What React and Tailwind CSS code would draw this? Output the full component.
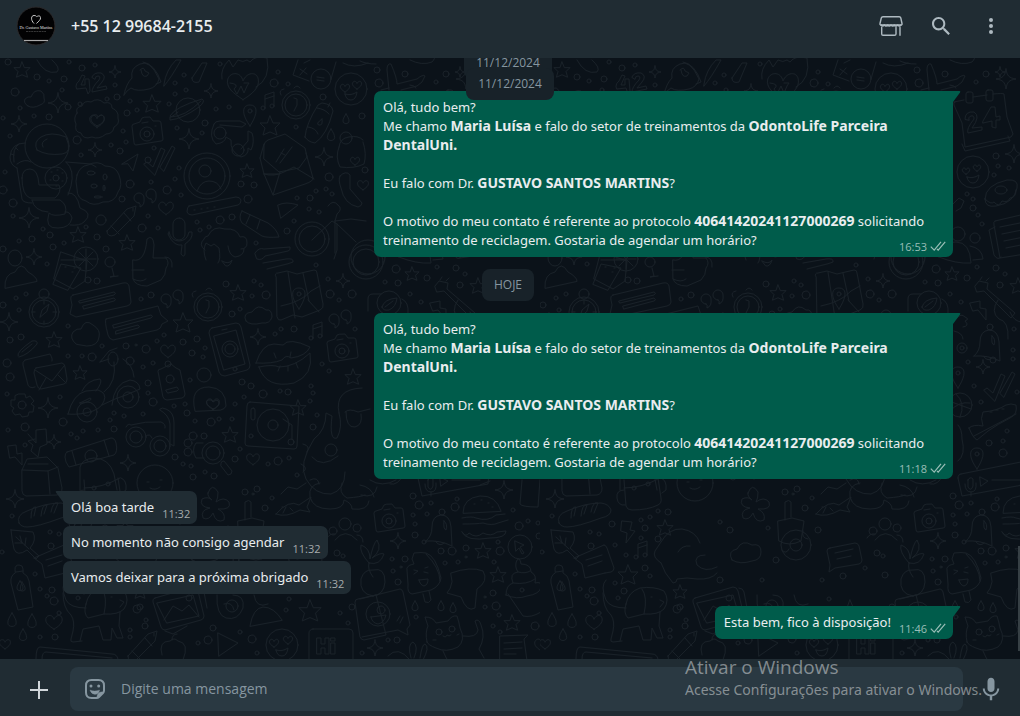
const dots = [
	// top left
	[8, 62, 3], [69, 62, 2], [82, 68, 3], [95, 65, 2], [64, 79, 3], [37, 77, 3], [49, 81, 2], [15, 92, 4],
	[20, 108, 2], [3, 118, 2], [62, 90, 2], [68, 107, 3], [49, 117, 3], [34, 116, 2], [80, 104, 2],
	[107, 99, 2], [117, 97, 3], [115, 85, 2], [130, 101, 2], [137, 110, 2], [127, 113, 3], [175, 83, 2],
	[184, 75, 2], [186, 90, 2], [175, 94, 2], [220, 64, 2], [169, 104, 2], [177, 128, 2], [205, 123, 3],
	[202, 133, 2], [216, 109, 2], [229, 107, 2], [274, 83, 4], [278, 72, 2], [288, 84, 2], [362, 116, 3],
	[323, 97, 3], [296, 127, 2], [10, 136, 2], [77, 140, 4], [111, 145, 2], [123, 131, 2], [126, 142, 2],
	[120, 151, 3], [81, 155, 2], [154, 148, 2], [148, 160, 3], [179, 168, 2], [175, 179, 2], [5, 172, 2],
	[3, 190, 4], [13, 203, 4], [130, 184, 4], [151, 182, 2], [167, 190, 4], [181, 195, 2], [122, 199, 3],
	[148, 216, 2], [142, 228, 4], [158, 228, 2], [101, 220, 5], [13, 216, 2], [43, 229, 2], [32, 239, 3],
	[19, 241, 2], [50, 235, 3], [3, 249, 3], [53, 247, 3], [64, 243, 2], [86, 227, 2], [97, 237, 3],
	[106, 249, 3], [47, 264, 2], [197, 222, 2], [220, 220, 4], [232, 217, 3], [209, 227, 2], [200, 230, 2],
	[241, 184, 3], [254, 185, 3], [248, 199, 4], [329, 177, 4], [316, 191, 2], [326, 189, 2], [297, 198, 2],
	[310, 198, 3], [332, 194, 2], [309, 209, 2], [319, 212, 2], [287, 231, 3], [294, 221, 2], [256, 243, 2],
	[316, 265, 2], [365, 170, 3],
	// middle left
	[16, 298, 2], [26, 294, 2], [3, 305, 3], [19, 310, 2], [88, 280, 3], [97, 281, 3], [68, 326, 2],
	[10, 340, 3], [21, 337, 3], [7, 363, 4], [10, 377, 4], [7, 394, 2], [60, 397, 2], [68, 356, 2],
	[82, 356, 2], [92, 357, 4], [126, 346, 3], [136, 345, 1], [102, 346, 2], [141, 299, 2], [151, 295, 3],
	[146, 349, 4], [130, 361, 4], [143, 367, 2], [153, 363, 2], [148, 383, 3], [148, 393, 2], [153, 402, 4],
	[164, 335, 2], [157, 341, 2], [183, 342, 3], [197, 339, 3], [192, 353, 3], [168, 364, 3], [203, 357, 2],
	[205, 348, 2], [226, 284, 3], [254, 281, 2], [261, 285, 2], [252, 296, 2], [266, 295, 4], [232, 314, 3],
	[240, 309, 2], [275, 334, 2], [281, 329, 2], [294, 329, 3], [328, 279, 2], [330, 294, 4], [339, 300, 2],
	[352, 294, 4], [355, 329, 2], [322, 364, 2], [329, 371, 2], [242, 382, 3], [251, 386, 3], [190, 380, 2],
	[185, 404, 2], [174, 406, 2], [244, 397, 2], [263, 394, 4], [280, 391, 2], [288, 392, 3], [235, 404, 2],
	[311, 386, 2], [313, 393, 2], [310, 401, 2], [317, 415, 2], [313, 427, 3], [187, 413, 3], [195, 421, 2],
	[211, 422, 4], [219, 419, 2], [232, 419, 2], [114, 413, 2], [124, 416, 2], [143, 414, 2], [110, 420, 2],
	[8, 430, 2], [25, 427, 4], [63, 422, 4], [71, 434, 2], [83, 431, 2], [98, 430, 2], [114, 429, 3],
	[77, 438, 2], [25, 445, 2], [175, 457, 3], [183, 464, 2], [191, 466, 2], [193, 477, 3], [205, 472, 2],
	[214, 476, 3], [235, 459, 3], [240, 449, 2], [278, 461, 4], [289, 458, 2], [268, 464, 2], [297, 475, 2],
	// bottom left
	[257, 489, 3], [265, 508, 3], [253, 494, 1], [245, 492, 3], [272, 498, 2], [12, 516, 2], [50, 532, 2],
	[59, 534, 2], [51, 546, 3], [2, 552, 2], [35, 574, 2], [40, 589, 2], [47, 596, 2], [52, 590, 3],
	[54, 601, 4], [59, 613, 2], [40, 637, 2], [55, 637, 3], [137, 609, 4], [146, 620, 2], [140, 607, 3],
	[145, 626, 3], [130, 630, 2], [130, 637, 2], [198, 643, 2], [213, 628, 3], [208, 640, 4], [240, 632, 2],
	[252, 639, 4], [257, 653, 2], [286, 610, 2], [303, 576, 3], [289, 599, 2], [340, 613, 2], [348, 623, 2],
	[352, 607, 3], [362, 653, 2], [337, 553, 3], [343, 556, 2],
	[72, 524, 3], [101, 520, 2], [110, 517, 2], [118, 511, 2], [128, 512, 3], [105, 528, 3], [101, 538, 2],
	[118, 539, 3], [75, 545, 2], [86, 555, 2], [105, 568, 3], [110, 576, 2], [75, 583, 2], [84, 591, 3],
	[78, 598, 2], [180, 522, 2], [190, 530, 3], [228, 528, 2], [236, 560, 3], [278, 530, 3], [282, 580, 2],
	[180, 580, 3], [222, 580, 2], [325, 568, 2], [345, 575, 3],
	// bottom right
	[413, 496, 3], [419, 505, 4], [431, 503, 2], [457, 499, 2], [455, 507, 4], [413, 515, 2], [427, 514, 2],
	[415, 524, 2], [415, 535, 3], [424, 542, 2], [441, 551, 3], [452, 551, 4], [466, 548, 3], [445, 563, 2],
	[458, 562, 2], [466, 557, 1], [392, 559, 2], [405, 559, 3], [393, 571, 2], [401, 567, 1], [398, 582, 3],
	[416, 617, 2], [485, 597, 1], [485, 607, 2], [493, 593, 3], [496, 606, 4], [499, 615, 2], [493, 626, 2],
	[500, 632, 2], [535, 626, 4], [498, 542, 2], [500, 551, 4], [494, 562, 2], [519, 526, 4], [513, 510, 2],
	[528, 521, 2], [538, 523, 2], [539, 536, 3], [522, 590, 2], [388, 640, 2], [397, 640, 3],
	// top right
	[377, 70, 3], [379, 83, 4], [405, 74, 3], [446, 74, 3], [436, 82, 2], [456, 156, 3], [458, 166, 2],
	[469, 168, 2], [454, 175, 2], [427, 194, 2], [433, 199, 2], [433, 208, 3], [438, 215, 2], [442, 224, 2],
	[437, 267, 2], [396, 269, 4], [385, 282, 2], [398, 283, 3], [427, 278, 3], [410, 294, 2], [421, 302, 2],
	[456, 268, 3], [465, 274, 2], [460, 285, 3], [474, 329, 2], [473, 350, 2], [428, 362, 2], [453, 360, 3],
	[473, 359, 2], [441, 402, 2], [434, 386, 2], [467, 431, 2], [449, 443, 3], [463, 441, 2], [463, 453, 4],
	[477, 392, 2],
];

const stars = [
	[22, 70, 8], [152, 104, 9], [247, 171, 7], [78, 235, 8], [127, 243, 8], [270, 126, 10], [54, 340, 8],
	[80, 373, 7], [183, 323, 10], [238, 293, 8], [298, 408, 8], [353, 377, 8], [230, 435, 8], [483, 551, 8],
	[498, 575, 8], [512, 623, 8], [310, 611, 11], [412, 274, 7], [478, 286, 8], [562, 70, 8],
	[125, 528, 8], [88, 575, 10], [140, 592, 7],
];

const sparkles = [
	[115, 72, 6], [58, 103, 10], [19, 124, 8], [211, 91, 7], [189, 139, 10], [95, 150, 7], [324, 157, 9],
	[29, 218, 10], [34, 257, 8], [9, 322, 9], [48, 408, 10], [258, 337, 8], [343, 281, 7], [54, 442, 7],
	[128, 463, 8], [15, 499, 9], [504, 490, 9], [555, 499, 9], [398, 541, 8], [375, 648, 8], [466, 79, 10],
	[474, 154, 9], [443, 367, 7], [460, 72, 5],
];

const hearts = [
	[166, 208, 8], [97, 121, 8], [243, 86, 17], [168, 351, 8], [213, 404, 7], [253, 459, 7], [54, 622, 9],
	[542, 645, 8], [363, 185, 6], [355, 161, 5], [5, 644, 6], [274, 643, 5], [288, 640, 5], [426, 171, 4],
	[437, 168, 4], [345, 88, 5], [357, 85, 5],
];

const drops = [
	[346, 119, 5], [331, 135, 6], [12, 620, 7], [32, 621, 7], [23, 635, 6], [415, 606, 5], [441, 606, 5],
	[453, 608, 5], [20, 586, 5], [561, 586, 5],
];

const starPath = 'M0-10 3-3 10-3 5 2 7 9 0 6-7 9-5 2-10-3-3-3Z';
const sparklePath = 'M0-10C1-3 3-1 10 0 3 1 1 3 0 10-1 3-3 1-10 0-3-1-1-3 0-10Z';
const heartPath = 'M0 8C-6 4-10 1-9-4-7-9-1-8 0-3 2-8 8-9 9-4 10 1 5 5 0 8Z';
const dropPath = 'M0-10C4-4 6 0 6 4 6 11-6 11-6 4-6 0-4-4 0-10Z';

const place = (list, d) => list.map(([x, y, r]) => (
	<path key={`${x}-${y}`} d={d} transform={`translate(${x} ${y}) scale(${r / 10})`} vectorEffect="non-scaling-stroke" />
));

const Doodles = () => {
	return (
		<svg className="absolute inset-0 w-full h-full" aria-hidden="true">
			<defs>
				<g id="camera">
					<path d="M-15-8q0-2 2-2l6-2 2-4q1-1 8-1l3 4 6 0q2 0 2 2l2 16q0 2-2 2l-25 4q-2 0-2-2Z" />
					<circle r="7" /><circle r="3" /><path d="M-5-11l6-1M8-8h1" />
				</g>
				<g id="face">
					<circle r="16" />
					<path d="M-6 5q6 2 12-2-1 8-6 8t-6-6Z" />
				</g>
				<g id="clock">
					<circle r="14" /><circle r="11" /><path d="M-2-7l3 1v6l-3 6M-2-17q3-4 6 0M-15-10q-3-5 3-6" />
				</g>
				<g id="quotes">
					<path d="M0 5a5 5 0 1 1 5-5q1 7-4 9 1-3-1-4ZM12 1a5 5 0 1 1 5-5q1 7-4 9 1-3-1-4Z" />
				</g>
				<g id="notes"><path d="M-5 7V-6l9-3V5M-5-2l9-3" /><circle cx="-7" cy="7" r="2" /><circle cx="2" cy="5" r="2" /></g>
				<g id="pin"><path d="M0 12C-10-2-7-9 0-9S9-2 0 12Z" /><circle cy="-3" r="2" /></g>
				<g id="bell">
					<path d="M-14 13q6-5 6-14 0-11 9-12 9 0 10 12l1 19q-12-6-26-5ZM-4 14q4 5 8 1M4-7q4 3 2 9-3-1-2-9Z" />
					<circle cx="2" cy="-16" r="3" />
				</g>
				<g id="leaf"><path d="M-12-12q12 1 22 2 4 8-3 16l9 8-3 3-9-9q-10 7-13-1-2-8-3-19ZM-7-5L6 7M-3-6l2 7M-8 1l7 0M3-4l-1 7" /></g>
				<g id="bottle"><path d="M-5-18q0-4 4-4t4 4l0 4q5 2 6 8l4 26-15 3-7-27q-1-7 4-10ZM2-5q6 8 1 9t-1-9ZM-4-15l7-1" /></g>
				<g id="bread"><path d="M-26 9q-3-8 8-12 18-8 34-8 8 1 10 7 0 6-10 8-24 9-34 9-6 0-8-4ZM-14 4q0-12 5-11l-2 9M-4 2q1-12 6-11l-3 9M6-2q2-11 7-9l-4 10" /></g>
				<g id="ticks"><path d="M-16 2l3-2 6 5L1-14l4 2-10 25ZM0 5L12-16l3 2L4 9Z" /></g>
				<g id="pencil"><path d="M-14 10L6-12 15-15 13-5-6 14q-8 3-8-4ZM-10 5l8 8M3-8l7 8M12-13v3" /></g>
			</defs>
			<pattern id="doodles" y="-58" width="540" height="716" patternUnits="userSpaceOnUse">
				<g fill="none" stroke="#192128" strokeWidth="1" strokeLinejoin="round" strokeLinecap="round">
					{dots.map(([x, y, r]) => <circle key={`${x}-${y}`} cx={x} cy={y} r={r} />)}
					{place(stars, starPath)}
					{place(sparkles, sparklePath)}
					{place(hearts, heartPath)}
					{place(drops, dropPath)}

					<use href="#camera" x="147" y="134" />
					<use href="#camera" x="342" y="351" />
					<use href="#camera" x="389" y="521" />
					<use href="#face" x="351" y="89" />
					<use href="#face" x="282" y="645" />
					<use href="#face" x="433" y="172" />
					<use href="#clock" x="296" y="105" />
					<use href="#clock" x="208" y="307" />
					<use href="#quotes" x="139" y="198" />
					<use href="#quotes" x="166" y="299" />
					<use href="#quotes" x="334" y="319" />
					<use href="#notes" x="270" y="101" />
					<use href="#notes" x="318" y="331" />
					<use href="#notes" x="103" y="550" />
					<use href="#pin" x="250" y="114" />
					<use href="#pin" x="418" y="376" />
					<use href="#pin" x="437" y="457" />
					<use href="#bell" x="440" y="528" />
					<use href="#bell" x="448" y="343" />
					<use href="#leaf" x="23" y="542" />
					<use href="#bottle" x="20" y="587" />
					<use href="#bread" x="45" y="514" />
					<use href="#ticks" x="160" y="162" />
					<use href="#ticks" x="460" y="388" />
					<use href="#pencil" x="121" y="221" />
					<use href="#pencil" x="142" y="646" />

					{/* 42 and cloud */}
					<path d="M76 86q0-3 3-5l3-6 3 1-4 9 4 0v-6h4l1 12-2 3-2-6-9 1ZM92 77q2-5 9-4 6 3 1 9l-5 6 9-2 1 3-15 3q0-5 7-12 2-4-1-4t-3 3Z" />
					<path d="M28 106q-5-3-3-7 3-3 6-2 3-8 10-6 4 3 3 7 2 5-4 7-7 4-12 1Z" />
					{/* rocket */}
					<path d="M124 95q2-11 8-17-2-10 8-14 10-5 19 15-2 8-10 10-12 3-18-1-4 2-7 7ZM140 70q4-4 5 1l4 2-2 3q-5 2-6-6M143 62q12 2 18 20l-5 2M164 84q2-14 12-24l5 0q-10 18-17 26ZM192 78l10-15 5 0-8 19q-7 2-7-4Z" />
					<path d="M222 79q-2-10 7-19l4 7 5-7q5 3 9 0l3 2q5-7 17-4 4 21-11 29M230 83q10 1 4 6l3 5 4-8 3 7 3-7 2-3h-5" />
					{/* calculator */}
					<path d="M298 60l-5 15 16 6M336 62l-5 17M310 60l-6 3M300 69l7 5M306 68l-6 7M37 60q8 15 20 12 4-4-5-12M343 63q11 6 25 0" />
					<circle cx="321" cy="79" r="10" /><path d="M317 77l7 1M317 80l7 1" />
					{/* badge */}
					<path d="M77 113q-2-6 5-7 2-6 9-4 7-5 13 1 8-2 8 5 7 3 6 10 2 6-4 9-1 7-8 7-7 6-14 3-9 3-11-4-7-1-5-9-3-6 1-11Z" />
					<path d="M97 126q-9-5-5-10 5-3 6 1 4-4 6 0 2 5-7 9Z" />
					{/* planet */}
					<circle cx="188" cy="110" r="12" />
					<path d="M178 112q-8 7-8 4 5-9 32-17 4 2-3 8-17 12-29 13l0-3q15 0 31-16" />
					{/* goggles */}
					<path d="M214 124q1-3 6-3h20l6 3-4 3-22-2M214 124q-6 13 2 20 9-1 10-7l5 3q-1 12 10 17 8-2 7-9l3 2q4-8 1-17l-4-2v10l-7 8" />
					<circle cx="220" cy="133" r="6" /><circle cx="238" cy="150" r="6" />
					{/* astronaut */}
					<circle cx="47" cy="146" r="22" />
					<path d="M37 150q-4-8 4-13 10-6 25 0 7 16-4 17-15 2-25-4ZM43 147q-3-5 4-8M25 143q-14 0-15 14 0 8 7 11M19 144q-7 4-5 18M11 154l3 1M16 148l2 2M17 168l5 31q1 4 10 4M22 178q0-9 8-9 8 0 9 16l20 0q3 7-4 13l-25 0q-8-3-8-20ZM17 164q8-6 14-2M66 162q9 8 5 24l-3 9M66 162l25 2 5 3M32 200q2 11 16 12M32 200l28 0q8 5 5 14-12 3-16-1-5 16 9 15 12 0 14-10-2-7-7-6M68 193q9-1 12 15 14 5 4 14-4 4-14 3" />
					<circle cx="56" cy="178" r="11" /><circle cx="56" cy="178" r="3" />
					<path d="M51 172h1M57 170h1M62 173h1M50 180h1M62 181h1M56 186h1" />
					<path d="M77 175q3-9 11-10 10-5 17 1 11 0 14 9 4 11-1 17-3 11-15 10-10 5-17-1-9-2-9-12-2-8 0-14Z" />
					<ellipse cx="91" cy="173" rx="4" ry="2" /><ellipse cx="105" cy="177" rx="2" ry="3" /><ellipse cx="94" cy="186" rx="3" ry="2" /><ellipse cx="104" cy="188" rx="1" ry="3" /><ellipse cx="98" cy="197" rx="4" ry="1" />
					<path d="M122 164l16-10-5 17-5-7Z" />
					{/* user badge */}
					<circle cx="207" cy="176" r="23" /><circle cx="207" cy="176" r="18" /><circle cx="205" cy="171" r="6" />
					<path d="M197 191q4-10 12-10 9 0 12 8" />
					<path d="M189 206l47-9q4 0 5 3 0 4-3 5l-46 10q-4 0-5-3 0-5 2-6ZM194 210h1M201 209h1M207 208h1M214 207h1" />
					{/* envelope */}
					<path d="M264 145q0-3 4-5l17-6 20 14 2 9-8 11-20 4-15-13ZM260 158l4-14M260 158l4 16 9 21M264 174h14M264 174q10 3 20-2l10-5 20 12M280 172l-7 23 32-11q9-3 8-6M313 178l-7-25M276 162l8-13M280 163l12-16M281 153l4 2" />
					{/* water bottle */}
					<path d="M305 137q1-13 13-32l4-2q10 1 11 8-6 24-18 32-7-1-10-6ZM308 127q8 1 10 7M317 108q8 1 12 6M328 107l2-4M322 119q-7 5-3 6t3-6" />
					<path d="M339 147q1-9 10-10 9-2 14 3M363 142q4 12 1 22-10 5-24 3-5-10-1-20M340 176q6-6 10-1l0 14 12 14q0 3-4 4-14-3-17-19-3-8-1-12Z" />
					<circle cx="346" cy="138" r="6" />
					{/* microphone */}
					<rect x="173" y="218" width="12" height="22" rx="6" /><path d="M169 232q-2 2 0 4 4 8 10 9l3 0-1 9q3 4 4 0v-10q8-5 7-12l-3 0q-2 9-10 9t-10-9" />
					{/* monkey */}
					<path d="M205 250q-7-5-1-11 1-3 4-3 5-11 17-7 12-1 15 8 7-2 7 6 0 6-6 6M206 260q-4-10 0-17l5 3 3-2 5 4q2 12-1 15M228 246q1 9 7 11 9-1 9-8M222 261q7 4 10-1-2 7-6 6Z" />
					<path d="M242 211l26 12q9 6 11 14-12 1-17-1l-20-13q-4-6 0-12ZM250 215l-4 9M260 220l-3 9M278 205q8-4 20 0l-17 13Z" />
					{/* brushes */}
					<path d="M255 253q4-6 9-4l26-2q1 3-2 4l-23 5q-3 5-8 3ZM263 263l23-4q8-1 7 3-5 2-10 3l-16 4" />
					{/* bike */}
					<circle cx="312" cy="239" r="17" /><circle cx="312" cy="239" r="13" />
					<path d="M312 240l20-19 5 3 19 18M335 221v32M335 221l16-2 15 2M328 206q5-7 10-1 5 4-1 9l-2 7M337 224v26l-3 9" /><circle cx="368" cy="257" r="17" />
					{/* cocktail */}
					<path d="M61 252l26 9-2 20-12 8-19-10ZM61 260h25M65 267h1M72 272h1M74 268h1" /><circle cx="86" cy="259" r="12" /><path d="M86 249v20M76 259h20M79 252l14 14M93 252l-14 14" />
					<circle cx="110" cy="262" r="5" /><path d="M112 268l2 8-4 1 8-1" /><ellipse cx="15" cy="258" rx="7" ry="8" />
					{/* thumb */}
					<path d="M133 260q12 3 14-21 6-5 7 6l-1 13h13q4 5 0 10 0 7-5 12l-14 6q-12 0-14-7ZM165 257q8 0 7 10M132 270h12M133 279q8 4 13 0" />

					<path d="M5 288q-1-14 10-16 6-12 13 0 9 5 9 9ZM53 284l8-20 20 4-13 22Z" />
					{/* compass */}
					<circle cx="44" cy="312" r="15" /><circle cx="44" cy="312" r="12" /><circle cx="44" cy="294" r="5" /><path d="M40 317l2-7 7-6-2 7ZM44 300v4M32 312h3M53 312h3M44 324v-3" />
					{/* letters */}
					<path d="M73 295l50-12q5-1 6 3l2 16q0 3-4 4l-51 11-6-3 2-9-1-5q-1-4 2-5ZM79 301l35-9q3 1 0 3l-34 8ZM83 306l31-8q3 2 0 3l-30 8Z" />
					<path d="M106 319l52-13 3 9 7 6-6 3q-1 5-5 6l-44 10q-4-1-5-5-4-15-2-16ZM113 325l38-10q3 1 0 3l-37 10ZM116 331l22-6q3 2 0 3l-22 6Z" />
					<path d="M76 344q-7-6-3-12 4-4 8-3 4-11 12-4 8 5 6 12-1 9-12 9Z" />
					<path d="M18 356q-2-4 14-15 6-1 5 3-9 11-18 13M22 352l10-8" />
					<path d="M25 360l25-6q3 5 2 7M25 360q-3 2-2 5l5 20q2 4 7 2M36 368l26-5q3 1 3 4l2 12q0 4-3 5l-23 5q-3 0-4-4l-3-12q0-4 2-5ZM35 370l17 11 12-15M39 390l7-12M66 383l-8-8" />
					{/* clouds */}
					<path d="M246 321q-4-8 6-9 6-9 14-2 6-1 6 7-2 7-10 6-12 3-16-2Z" />
					{/* map */}
					<path d="M276 277q-2-4 2-4l9-2 10 3 17-4q3 0 3 3l6 31q1 4-3 6l-18 7-9-2-12 5q-3 1-4-3ZM281 306q20-4 30-15l9-5M308 300l11 12M288 272l7 46M303 273l6 28" />
					<use href="#pin" x="299" y="297" />
					{/* gear */}
					<circle cx="22" cy="405" r="4" /><path d="M19 394h6l1 4 4-2 4 5-3 3 3 2-1 6-4 0-1 4-6 1-2-3-5 1-3-4 2-3-3-2 0-6 4 0 0-4Z" />
					{/* scooter */}
					<path d="M68 414q5-20 18-23l12-1q9 3 6 11-3 9-18 12-12 2-18 1ZM80 403l10-5q3 1-3 4-6 2-7 1ZM82 391q5-11 18-12 3 3-4 12M114 362q3 20-10 30M100 362l9-11 8-3M112 405q2-22 18-25 9 1 10 9l-14 6-11 4-13 6M100 362l9-3M123 359q10 6 11 18" />
					<ellipse cx="113" cy="359" rx="5" ry="7" /><circle cx="87" cy="412" r="10" /><circle cx="87" cy="412" r="4" /><circle cx="128" cy="397" r="11" /><circle cx="128" cy="397" r="5" />
					{/* passport and phone */}
					<path d="M158 371q0-2 3-2l10-5 5 4 4 2 5 24q0 3-3 4l-15 2q-3 0-4-3ZM166 390l11-3q3 3 0 4l-9 2Z" /><circle cx="170" cy="379" r="4" />
					<path d="M212 328l24-5q4 0 5 4l9 38q0 4-3 5l-22 6q-5 0-6-4l-10-39q0-4 3-5ZM214 336l22-6 9 34-21 6ZM222 330l5-1" /><circle cx="230" cy="349" r="8" /><circle cx="230" cy="349" r="5" /><circle cx="235" cy="369" r="2" />
					{/* lips */}
					<path d="M256 363q6-19 18-19l9 1q6-8 27 2-4 9-19 11-5-4-9 2-10 4-26 3ZM259 367q14-3 20 0 16 0 31-14 4 22-16 30-28 6-35-16ZM276 358l-2-5M290 357l1-5M280 366l-2 5M288 366v5M296 363l2 5" />
					<circle cx="204" cy="375" r="7" /><path d="M195 411q-6-24 14-24 17 1 17 19-1 3-5 4ZM213 409q-10-6-5-9 4-1 5 2 5-4 6 1 0 4-6 6Z" />
					{/* sunglasses */}
					<circle cx="136" cy="437" r="10" /><circle cx="136" cy="437" r="6" /><circle cx="160" cy="446" r="10" /><circle cx="160" cy="446" r="6" />
					<path d="M126 427q2-4 5-2 14-4 30-3 5 2 4 6M160 409q2-2 6 0 8 3 8 14v23l-4-2v-20q-1-9-10-14ZM146 436q4-3 6 2" />
					<path d="M28 434l8 9 0-13 10-1 1 15-7 3-2 10-7-6 2-6-5-4 7-2M8 446l8-1 1 9 5-1 0 12-7-8-5 1Z" />
					{/* turntable */}
					<path d="M250 402l49 4-2 40q0 3-3 3l-46-3q-3 0-3-3l2-37q0-4 3-4Z" /><circle cx="273" cy="425" r="16" /><circle cx="273" cy="425" r="5" /><circle cx="291" cy="442" r="3" /><circle cx="251" cy="436" r="2" /><path d="M292 439v-14l-9-6" /><rect x="251" y="408" width="4" height="12" rx="2" />
					{/* magnifier and paw */}
					<circle cx="213" cy="453" r="11" /><circle cx="213" cy="453" r="7" /><path d="M221 463q0-2 3-2l8 10q0 4-4 4l-7-9ZM203 443l-7 0q-5 7 0 15l8 0" /><circle cx="193" cy="436" r="4" /><circle cx="204" cy="436" r="3" /><circle cx="188" cy="443" r="4" /><circle cx="188" cy="452" r="4" />
					{/* robot */}
					<path d="M67 452l44-14q4 0 5 5 2 9-2 12l-45 12q-4-5-4-10 0-4 2-5ZM104 440l5 16M72 451l4 14M80 490v-23q2-8 14-9 15 0 20 16l3 16" /><circle cx="91" cy="456" r="6" />
					<circle cx="155" cy="483" r="18" /><path d="M147 482h2M160 480h2M150 488q5 3 10-1" />
					{/* milk carton */}
					<path d="M22 470l5-11 20-2 11 11 4 20q0 6-5 7l-31 1q-4-1-4-5ZM22 470l26 1 10-4M28 464h20M48 471l2 23" />
					{/* octopus */}
					<path d="M339 413q-5-24 23-25M339 413q4 14-2 25-8 3-5-22l-6-3q0 17-12 26-16 25-8 40 9 16 25 15 14-4 14-22M312 457q10 12 26-1M303 444q8 2 4 8M301 464q8 4 2 8M310 480q8-4 9 4M345 412q4-4 13 0l12-3M346 412q0 16 9 15 8-2 6-13" />
					<circle cx="331" cy="450" r="6" />
					{/* fish, flower */}
					<path d="M276 514q13-15 23-9l12-8-4 10 3 5-10-2q-14 8-24 4ZM283 513l3-6M282 507h1M290 508l3 3" />
					<path d="M208 493q4-11 10-1 0 7-2 10 8-6 13 0 3 8-11 7 8 4 6 11-8 4-11-7-4 8-10 5-3-8 7-10-11-1-8-9 6-3 10 1-5-4-4-7Z" />
					{/* backpack and bolt */}
					<path d="M84 480l2 26q1 4 6 4 16 0 26-5 4-2 3-7l-3-20M84 490q-8 0-7 8 1 8 8 7M121 478q6 2 5 12l-4 3M84 488q18 0 36-10" />
					<circle cx="94" cy="488" r="2" /><circle cx="108" cy="484" r="2" />
					<path d="M82 521l10 1-2 8 5 1-9 12 1-10-6-2Z" />
					{/* hand */}
					<path d="M121 563q-9-6-6-12l6-9q8-14 21-13 14 2 18 14M121 563q3 10 12 20 4 0 4-4 10-2 20 0 14 1 20-6M138 552q4-7 12-6M165 555q-12 0-8 10 8 8 20 2" />
					{/* clouds and spool */}
					<path d="M192 560q-5-9 5-11 5-10 15-4 9-2 9 7 0 8-9 9-12 4-20-1Z" />
					<circle cx="256" cy="545" r="15" /><circle cx="256" cy="545" r="6" />
					<path d="M242 550q4 5 7-1M263 531q-2 7 5 8" />
					<path d="M290 548l25-5q3 0 4 3l3 14q0 3-3 4l-24 4-6 4 1-7-3-14q0-3 3-3ZM295 553l18-4M297 559l14-3" />
					{/* cactus and pot */}
					<path d="M245 520v-18q4-3 6 0v15M238 521l14-3 12 3-3 20q-12 6-22 0ZM320 483q-12 2-10 14 3 12 20 12 14 0 14-9 8 3 8 9 16 2 17-8M281 494l7-7 9 2 9-6M342 483q-4 10 5 15 14-1 18-3" />
					<circle cx="345" cy="524" r="6" /><circle cx="333" cy="531" r="4" /><circle cx="357" cy="528" r="4" /><path d="M335 540q10-13 22 0M327 538q3-5 8-4M363 542q0-7-6-7" />
					<path d="M34 558l30-13M34 558l8 6 3 14 20-5M46 560l16-5M48 566l14-5M64 545q2 0 3 3l7 20q0 3-3 4l-6 1" />
					{/* dog */}
					<path d="M66 580q-6 6 0 20 4 8 20 8M63 593q0 15 8 22 4 6 2 16l-2 8q-1 3 2 3l9-1M86 604q2-12 14-16 14-2 24 3 6 9 0 18-6 6-20 5l-16 4q-5-5-2-14ZM102 589q6 8 2 25M111 597h1M120 600l4 2-4 5M80 641l3-12 16-3 4 14 8 0 1-12 5 10 6 0-4-12 1-14" />
					{/* picture cards */}
					<path d="M155 598l38-11q4 0 5 4l6 25q0 3-3 4l-36 10q-3 0-4-3l-8-25q-1-3 2-4ZM157 603l36-8 6 21-32 7ZM164 620l9-14 9 5 7-6 10 12M199 588q4 0 5 4l3 16M165 631l8 3 14-8" /><circle cx="189" cy="598" r="3" />
					<path d="M217 595q-1 20 9 23 12 3 17-10 2-13-10-13M224 604q8-3 10 6" /><circle cx="232" cy="606" r="6" />
					<path d="M250 626q3-18 13-19 11 0 19 13ZM254 595q2 14 14 9" /><path d="M355 602q0-3 3-3l18-4 10 40-22 5q-3 0-4-3Z" />
					{/* laptop */}
					<path d="M36 659q0-12 4-12l72 7q5 0 6 5M42 659q0-7 4-7l66 6" />
					<path d="M162 655q-4-14 8-14 4-4 8 0 12 2 5 19M172 640q0-6 5-6M218 633l20 10-19 13Z" />
					<rect x="309" y="629" width="44" height="34" rx="4" />
					<path d="M317 638h4v6h4v-6h4v16h-4v-6h-4v6h-4ZM331 643h4v11h-4ZM331 638h4v3h-4Z" />
					{/* plane and calendar */}
					<path d="M389 90l-2-20q0-7 4-6 6 14 6 20l20-5q6-5 8-3-2 7-8 10l-16 4M376 64q-10 0-16-3M410 60q12 6 22 2 4-4 2-6M381 90l8-2M410 85q4 0 6 3" />
					<path d="M414 102l10-2M433 97l14-2M453 94q10-1 11 0l3 23 6 17-2 3-46 10-3-24-8-18q-1-3 1-3M422 144l3 7 45-10-2-5" />
					<rect x="426" y="92" width="7" height="11" rx="2" /><rect x="446" y="90" width="7" height="11" rx="2" />
					<path d="M425 119q0-8 9-7 7 4-2 16l10-1v3l-14 3q-2-4 6-14 0-4-3-3t-2 4ZM443 121l8-14 4 0 1 10 4-1 0 4-4 0 0 8-4-1 0-6-9 2Z" />
					{/* donut */}
					<path d="M445 199q0-14 22-19 12-1 10 8-3 15-21 18-11 2-11-7ZM445 199q6 6 9 3 5 6 8-1 6 2 8-3 6 0 6-8" /><ellipse cx="461" cy="190" rx="6" ry="4" />
					<path d="M413 204l6-6 5 3-3 7-5 3M455 221l30-7M455 221q-2 1-1 4l6 33 25-4M455 227l-6 3 5 25q4 6 7 2M460 227l20-4M462 234l20-4M464 241l20-4M466 248l20-4" />
					{/* people */}
					<circle cx="418" cy="234" r="7" /><circle cx="435" cy="238" r="5" /><path d="M399 257q3-16 17-15 14 0 15 21-15 1-32-6ZM430 246q12 2 13 13l-10 1" />
					<circle cx="366" cy="262" r="17" /><circle cx="366" cy="262" r="13" />
					<path d="M368 311v-12q0-5 5-5h8M402 299q7 3 6 14" /><circle cx="389" cy="303" r="12" /><path d="M382 307q2-8 15-9-1 9-8 12-6 1-7-3ZM385 307l8-6" />
					{/* guitar */}
					<path d="M435 286l4-5 9 2-1 6 28 24-4 5-27-27-7 1ZM440 280l2-3M446 281l3-3M470 312q4 10 12 10M458 300q-8 12 1 19 10 2 9 20M430 303l10-2 0 7 6 1 0 11-8-10-5 1Z" />
					<path d="M413 321l4-3q4-5 8-1 5 2 0 4 5 5-2 6M414 331q9 2 9 8" /><circle cx="422" cy="348" r="5" /><circle cx="422" cy="348" r="2" />
					{/* ball and shoe */}
					<circle cx="420" cy="405" r="12" /><path d="M409 401l22 8M416 394q10 9 4 23M410 411q9-10 20-8" />
					<path d="M429 428q4-4 14-2-3-8 0-14 14-1 23-7 5-2 10 0 2 9-6 13-12 6-22 13l-11 9q-4-2-8-12ZM434 436l42-22M450 412h2M456 410h2M462 409h2" />
					{/* voice note */}
					<path d="M421 474l80-16q4 0 5 3M418 478l4 18 66-12 1-10M480 485l10-4M452 480h28M440 477l8 4-7 5ZM428 480v7q3 5 5-1v-7q-3-3-5 1ZM425 484q0 8 6 8t5-9M431 492v4" /><path d="M418 478q0-4 3-4" />
					<path d="M418 425q4 4 4 14 4 16-4 22M361 495q14 4 16-8M370 480q12 8 26 0M390 484q8 2 14-10M360 485q12 2 14 12" />
					{/* burger */}
					<path d="M463 513q0-15 17-17 16-1 21 15ZM462 518q10-2 14 0 12 4 20-3l9-1M463 524q14 0 20-1 9 3 15 0l10-3M462 532q4 6 7 1 7 6 14 0 8 4 14-1l9-1q0 7-16 7-24 4-28-6ZM474 504h1M481 500h1M488 503h1M492 507h1" />
					<circle cx="520" cy="547" r="12" /><path d="M515 541l9 4-4 2 4 6-2 1-3-6-3 3Z" />
					<path d="M522 480l-2 24q2 3 18 3l2-27" />
					{/* cherry and ice cream */}
					<path d="M373 596q-14-2-12-17 3-10 12-9 12-3 12 12-1 13-12 14ZM373 577q-6-8-4-14M369 563q-10-11-8-18 9 3 9 14 3-15 7-19 6 10-5 18 9-6 12-4-4 12-15 9" />
					<path d="M408 585q-1 8 4 9l19-4q9-4 10-12-5-22-15-25-4-1-12 0l-2 6 2 5q-6 1-7 4ZM426 554q14 14 14 27M423 594l2 8q4 2 6-2l-2-9M414 570l4 1-4 3M425 568l3-1M424 572l4 1M419 580l9-1q0 6-4 7-4-1-5-6Z" />
					<path d="M451 573q20-7 32-2 6 10-6 18-1 8-2 19-8 5-14-11l-14-4q4-4 5-11Z" />
					{/* speech card */}
					<path d="M360 599l40-10q2 0 3 3l7 33-3 4 1 6-10-5-36 7" /><circle cx="378" cy="614" r="12" /><circle cx="381" cy="610" r="4" /><path d="M371 617l15-2q-2 8-8 9-6-1-7-7ZM397 621l3-5M400 623l3-6" />
					{/* cat */}
					<path d="M427 642q-2-10 1-16l-3-9q8 0 11 6l12-2q4-6 9-5 2 6 3 12 6 12-2 19-12 6-22 1-8-3-9-6ZM463 636q14 2 15-6l-3-9q4-3 6 4 5 12-2 24l5 9M443 651q3 7 5 10" /><circle cx="439" cy="632" r="3" /><circle cx="452" cy="629" r="3" /><path d="M443 636q3 2 4-1 2 2 4 0M433 640h3M457 635l2-1" />
					<path d="M388 656q10-11 22 4M411 658q-4-14 2-16 6 4 1 16M420 658q2-14 5-14 5 3-2 16" />
					{/* cupcake */}
					<path d="M508 594l15 22q8 2 18-4v-28M506 595q0-10 7-12-4-10 5-11-4-6-1-12 3-3 4 4 10 0 10 8 6 3 4 11 7-2 6 4-1 7-14 9-10 4-21-1ZM513 583q14 2 22-4M518 572q8 2 12-1" />
					<path d="M500 636l28-1-4 4 3 22h-27ZM504 643l18-1M504 649l18-1M504 654h12" />
				</g>
			</pattern>
			<rect width="100%" height="100%" fill="url(#doodles)" />
		</svg>
	);
};

const DoubleCheck = () => {
	return (
		<svg viewBox="0 0 16 11" className="w-4 h-[11px]" fill="none" stroke="currentColor" strokeWidth="1.2" role="img" aria-label="Entregue">
			<path d="M0.8 5.6 4.2 9.2 11 0.8M7 8 8.2 9.2 15.2 0.8" />
		</svg>
	);
};

const DatePill = ({ children }) => {
	return (
		<div className="self-center h-8 px-3 flex items-center rounded-lg bg-[#182229] text-[#8696a0] text-[12px]">
			{children}
		</div>
	);
};

const Message = ({ out, tail, time, children }) => {
	return (
		<div className={`relative rounded-[7px] py-[7px] text-[13px] leading-[19px] text-[#e9edef] max-w-[579px] font-['Noto_Sans',sans-serif]
			${out ? 'self-end bg-[#005c4b] pl-[9px] pr-[7px]' : 'self-start bg-[#202c33] pl-2 pr-[7px]'}
			${tail ? (out ? 'rounded-tr-none' : 'rounded-tl-none') : ''}`}
		>
			{tail && (
				<svg viewBox="0 0 8 12" aria-hidden="true"
					className={`absolute top-0 w-2 h-3 ${out ? 'left-full text-[#005c4b]' : 'right-full text-[#202c33] -scale-x-100'}`}
				>
					<path fill="currentColor" d="M0 0H6.5Q8 0 7 1.6L0 11Z" />
				</svg>
			)}
			{children}
			<span className={`float-right ml-2 mt-2 flex items-center gap-[3px] text-[11px] leading-[15px] -mb-[6px] font-['Open_Sans',sans-serif]
				${out ? 'text-[#99beb7]' : 'text-[#a6abad]'}`}
			>
				{time}
				{out && <DoubleCheck />}
			</span>
		</div>
	);
};

const Strong = ({ children }) => <b className="text-[14px] leading-[18px]">{children}</b>;

const TrainingMessage = ({ time }) => {
	return (
		<Message out tail time={time}>
			<p className="w-[563px] max-w-full">
				Olá, tudo bem?<br />
				Me chamo <Strong>Maria Luísa</Strong> e falo do setor de treinamentos da <Strong>OdontoLife Parceira</Strong><br />
				<Strong>DentalUni.</Strong>
			</p>
			<p className="mt-[19px]">Eu falo com Dr. <Strong>GUSTAVO SANTOS MARTINS</Strong>?</p>
			<p className="mt-[19px]">
				O motivo do meu contato é referente ao protocolo <Strong>40641420241127000269</Strong> solicitando
			</p>
			treinamento de reciclagem. Gostaria de agendar um horário?
		</Message>
	);
};

const Header = () => {
	return (
		<header className="h-[58px] shrink-0 bg-[#202c33] flex items-center pl-4 pr-[9px] pb-[6px]">
			<svg viewBox="0 0 40 40" className="size-10 shrink-0" role="img" aria-label="Dr. Gustavo Martins">
				<circle cx="20" cy="20" r="19" fill="#020203" stroke="#2b2a2c" />
				<path d="M18 17.500C14.500 14 15 9.500 18 9.500S20 11 21 10.500 24 9 24.500 11.500 22.500 15 20.500 17.500" fill="none" stroke="#c9c9c9" strokeWidth="1" />
				<text x="20" y="23" textAnchor="middle" fontSize="4" fill="#e5e5e5" fontFamily="Liberation Serif, serif">Dr. Gustavo Martins</text>
				<path d="M10 25.500H30" stroke="#5b5b5b" strokeWidth="0.6" strokeDasharray="2 0.6" />
				<path d="M8 34.500H32" stroke="#a9a9a9" strokeWidth="1.200" />
			</svg>
			<h1 className="ml-[15px] flex-1 text-[16px] leading-5 font-semibold text-[#e9edef]">+55 12 99684-2155</h1>
			<div className="flex items-center gap-[10px] text-[#aebac1]">
				<button type="button" aria-label="Loja" className="size-10 p-2">
					<svg viewBox="0 0 24 24" className="size-6" fill="none" stroke="currentColor" strokeWidth="1.4" strokeLinecap="round" strokeLinejoin="round">
						<path d="M4 2.700H20.200Q21.500 2.700 21.800 4L23 9.500Q23.200 11 22 11H2Q.8 11 1 9.500L2.300 4Q2.600 2.700 4 2.700Z" />
						<path d="M2 11Q3.500 13 5.300 11 7 13 8.700 11 10.300 13 12 11 13.700 13 15.300 11 17 13 18.700 11 20.500 13 22 11M2.700 13.500V20Q2.700 21.300 4 21.300H15.500Q17 21.300 17 20V13.500M21 13.500V21.300" />
					</svg>
				</button>
				<button type="button" aria-label="Pesquisar" className="size-10 p-2">
					<svg viewBox="0 0 24 24" className="size-6" fill="currentColor">
						<path d="M15.900 14.300H15L14.700 14c1-1.100 1.600-2.700 1.600-4.300 0-3.700-3-6.700-6.700-6.700S3 6 3 9.700s3 6.700 6.700 6.700c1.600 0 3.200-.6 4.300-1.600l.3.3v.8l5.100 5.100 1.500-1.500-5-5.200zM9.700 14.300c-2.600 0-4.600-2.100-4.600-4.600s2.100-4.600 4.600-4.600 4.600 2.100 4.600 4.600-2 4.600-4.600 4.600z" />
					</svg>
				</button>
				<button type="button" aria-label="Mais opções" className="size-10 p-2">
					<svg viewBox="0 0 24 24" className="size-6" fill="currentColor">
						<circle cx="12" cy="6" r="2" />
						<circle cx="12" cy="12" r="2" />
						<circle cx="12" cy="18" r="2" />
					</svg>
				</button>
			</div>
		</header>
	);
};

const Composer = () => {
	return (
		<footer className="shrink-0 bg-[#202c33] flex items-center pl-[19px] pr-[9px] pt-2 pb-[5px]">
			<button type="button" aria-label="Anexar" className="size-10 p-2 text-[#d1d7db]">
				<svg viewBox="0 0 24 24" className="size-6" fill="none" stroke="currentColor" strokeWidth="2">
					<path d="M12 4V22M3 13H21" />
				</svg>
			</button>
			<div className="ml-[11px] flex-1 h-11 rounded-lg bg-[#2a3942] flex items-center pl-[13px] text-[#8696a0]">
				<button type="button" aria-label="Figurinhas" className="shrink-0">
					<svg viewBox="0 0 24 24" className="size-6" fill="none" stroke="currentColor" strokeWidth="2" strokeLinejoin="round">
						<path d="M8.500 3H15.500Q21 3 21 8.500V13.500Q21 15 20 16L16 20Q15 21 13.500 21H8.500Q3 21 3 15.500V8.500Q3 3 8.500 3Z" />
						<path d="M7 13.200Q11.500 15 16.500 13.200 15.500 17.300 12 17.300T7 13.200Z" fill="currentColor" strokeWidth="0.500" />
						<path d="M14 21V19.500Q14.500 15.500 18 15H21L14 21Z" fill="currentColor" strokeWidth="0.500" />
						<circle cx="8" cy="9" r="1.500" fill="currentColor" stroke="none" />
						<circle cx="15.700" cy="9" r="1.500" fill="currentColor" stroke="none" />
					</svg>
				</button>
				<input type="text" aria-label="Digite uma mensagem" placeholder="Digite uma mensagem"
					className="ml-[14px] flex-1 min-w-0 bg-transparent outline-none text-[14px] leading-5 text-[#e9edef] placeholder:text-[#8696a0]" />
			</div>
			<button type="button" aria-label="Mensagem de voz" className="ml-2 size-10 p-2 text-[#8696a0]">
				<svg viewBox="0 0 24 24" className="size-6" fill="currentColor">
					<path d="M12 14.900c2 0 3.500-1.500 3.500-3.500V4.400c0-2-1.500-3.600-3.500-3.600s-3.500 1.500-3.500 3.600v7c0 2 1.500 3.500 3.500 3.500zM18.200 11.400c0 3.500-2.900 6-6.200 6s-6.200-2.500-6.200-6h-2c0 4 3.200 7.300 7 7.900v3.900h2.400v-3.900c3.900-.6 7-3.900 7-7.900z" />
				</svg>
			</button>
		</footer>
	);
};

export default function App() {
	return (
		<div className="relative h-screen flex flex-col overflow-hidden bg-[#0b141a] font-['Open_Sans','Noto_Sans',sans-serif]">
			<Header />
			<main className="relative flex-1 min-h-0 overflow-hidden bg-[#0b1219] flex flex-col justify-end pl-[63px] pr-[67px] pb-5">
				<Doodles />
				<div className="relative flex flex-col gap-3">
					<DatePill>11/12/2024</DatePill>
					<TrainingMessage time="16:53" />
					<DatePill>HOJE</DatePill>
					<TrainingMessage time="11:18" />
					<div className="flex flex-col gap-[2px]">
						<Message tail time="11:32">Olá boa tarde</Message>
						<Message time="11:32">No momento não consigo agendar</Message>
						<Message time="11:32">Vamos deixar para a próxima obrigado</Message>
					</div>
					<Message out tail time="11:46">Esta bem, fico à disposição!</Message>
				</div>
				<div className="absolute top-[10px] inset-x-0 flex justify-center">
					<DatePill>11/12/2024</DatePill>
				</div>
				<div className="absolute right-0 bottom-2 w-[2px] h-[105px] bg-[#374045]" />
			</main>
			<Composer />
			<div className="absolute right-[38px] bottom-4 text-[#ffffff70] pointer-events-none">
				<p className="text-[19px] leading-[26px]">Ativar o Windows</p>
				<p className="text-[14px] leading-5 font-['Noto_Sans',sans-serif]">Acesse Configurações para ativar o Windows.</p>
			</div>
		</div>
	);
}
